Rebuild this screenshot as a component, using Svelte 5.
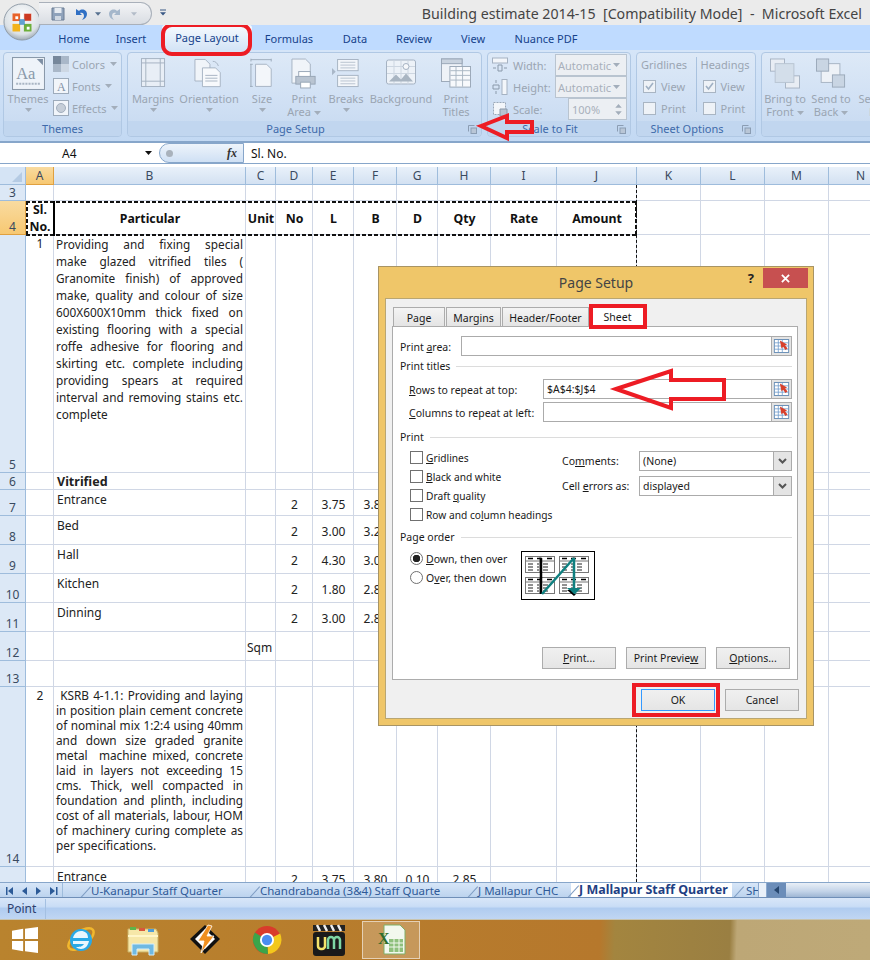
<script>
  const tabs = [
    { name: 'Home', w: 58 },
    { name: 'Insert', w: 56 },
    { name: 'Page Layout', w: 90, on: true },
    { name: 'Formulas', w: 68 },
    { name: 'Data', w: 64 },
    { name: 'Review', w: 54 },
    { name: 'View', w: 64 },
    { name: 'Nuance PDF', w: 82 }
  ]
  const colNames = ['A', 'B', 'C', 'D', 'E', 'F', 'G', 'H', 'I', 'J', 'K', 'L', 'M', 'N']
  const rowNums = [3, 4, 5, 6, 7, 8, 9, 10, 11, 12, 13, 14, 15]

  const text1 = [
    'Providing and fixing special',
    'make glazed vitrified tiles (',
    'Granomite finish) of approved',
    'make, quality and colour of size',
    '600X600X10mm thick fixed on',
    'existing flooring with a special',
    'roffe adhesive for flooring and',
    'skirting etc. complete including',
    'providing spears at required',
    'interval and removing stains etc.',
    'complete'
  ]
  const text2 = [
    '\u00a0KSRB 4-1.1: Providing and laying',
    'in position plain cement concrete',
    'of nominal mix 1:2:4 using 40mm',
    'and down size graded granite',
    'metal  machine mixed, concrete',
    'laid in layers not exceeding 15',
    'cms. Thick, well compacted in',
    'foundation and plinth, including',
    'cost of all materials, labour, HOM',
    'of machinery curing complete as',
    'per specifications.'
  ]

  // row number -> column letter -> value, everything else is empty
  const measures = [
    [7, 'Entrance', '3.75', '3.80'],
    [8, 'Bed', '3.00', '3.20'],
    [9, 'Hall', '4.30', '3.00'],
    [10, 'Kitchen', '1.80', '2.80'],
    [11, 'Dinning', '3.00', '2.80']
  ]

  const sheetTabs = [
    { name: 'U-Kanapur Staff Quarter', w: 169 },
    { name: 'Chandrabanda (3&4) Staff Quarte', w: 218 },
    { name: 'J Mallapur CHC', w: 95 }
  ]
</script>

{#snippet pick()}
  <svg class="pick" viewBox="0 0 20 20">
    <rect x="1" y="2" width="18" height="16" fill="#fff" stroke="#4f7cab" />
    <path d="M1 6h18M1 10h18M1 14h18M6 2v16M11 2v16" stroke="#6f9bcb" fill="none" />
    <path d="M8 3l9 5-2.500 1 3 4-2.500 2-3-4-2 2z" fill="#d8402c" />
  </svg>
{/snippet}

{#snippet caret()}
  <svg class="caret" viewBox="0 0 7 4"><path d="M0 0h7L3.5 4z" fill="#a3aebb" /></svg>
{/snippet}

{#snippet launcher()}
  <svg class="launcher" viewBox="0 0 9 9">
    <path d="M.5.5h6M.5.5v6" stroke="#8b9db3" fill="none" />
    <rect x="3" y="3" width="5.5" height="5.5" fill="#b9c6d6" stroke="#8b9db3" />
  </svg>
{/snippet}

{#snippet check(on)}
  <span class="rcheck">
    {#if on}<svg viewBox="0 0 11 11"><path d="M2 5l2.5 3L9 2" stroke="#9fb0c4" stroke-width="1.6" fill="none" /></svg>{/if}
  </span>
{/snippet}

<div class="screen">
  <header class="title">
    <div class="orb">
      <svg viewBox="0 0 40 40" width="38" height="38">
        <defs>
          <radialGradient id="orbg" cx="50%" cy="35%" r="70%">
            <stop offset="0" stop-color="#fff" />
            <stop offset=".7" stop-color="#dbe1e6" />
            <stop offset="1" stop-color="#8d9aa6" />
          </radialGradient>
        </defs>
        <circle cx="20" cy="20" r="19" fill="url(#orbg)" stroke="#8e9aa5" />
        <path d="M10 11h8v8h-8z" fill="#e8632a" />
        <path d="M13 14h3v3h-3z" fill="#fff" />
        <path d="M22 11h8v8h-8z" fill="#cc3a22" stroke="#fff" stroke-width=".5" />
        <path d="M10 22h8v8h-8z" fill="#f2b31c" />
        <path d="M22 22h8v8h-8z" fill="#6caf3a" />
        <path d="M25 25h3v3h-3z" fill="#fff" />
        <path d="M17 17h6v6h-6z" fill="#3f8bc7" opacity=".8" />
      </svg>
    </div>
    <div class="qat">
      <svg viewBox="0 0 14 14" width="14" height="14">
        <path d="M1 1h12v12H1z" fill="#8fa2bb" stroke="#6a7c94" />
        <path d="M3.5 1h7v5h-7z" fill="#e6ebf1" />
        <path d="M4 9h6v4H4z" fill="#d0d8e2" />
      </svg>
      <svg viewBox="0 0 14 14" width="14" height="14">
        <path d="M3 2v6h6L7 6c2-1 4 0 4 3 0 1-1 3-2 4 3-1 5-3 5-6 0-4-5-6-8-3z" fill="#2f6fc4" />
      </svg>
      <svg viewBox="0 0 7 4" width="6" height="4"><path d="M0 0h7L3.5 4z" fill="#56708f" /></svg>
      <svg viewBox="0 0 14 14" width="14" height="14">
        <path d="M11 2v6H5l2-2C5 5 3 6 3 9c0 1 1 3 2 4-3-1-5-3-5-6 0-4 5-6 8-3z" fill="#a5b7cb" />
      </svg>
      <svg viewBox="0 0 7 4" width="6" height="4"><path d="M0 0h7L3.5 4z" fill="#b3bcc8" /></svg>
    </div>
    <svg class="customize" viewBox="0 0 7 8" width="6" height="8"><path d="M0 0h7v1H0zM0 3h7L3.5 7z" fill="#3b5a86" /></svg>
    <div class="doc">Building estimate 2014-15&nbsp; [Compatibility Mode] &nbsp;-&nbsp; Microsoft Excel</div>
  </header>

  <nav class="tabs">
    {#each tabs as t}
      <span class="tab" class:on={t.on} style="width:{t.w}px">{t.name}</span>
    {/each}
  </nav>

  <section class="ribbon">
    <div class="group g-themes">
      <div class="gbody">
        <div class="big themes-btn">
          <svg viewBox="0 0 32 32" width="33" height="33">
            <rect x=".5" y=".5" width="31" height="31" fill="#eef3f9" stroke="#8a99aa" />
            <path d="M24 2h6v6z" fill="#7d8ea3" />
            <text x="4" y="21" font-size="16" fill="#8a99aa" font-family="Liberation Serif, serif">Aa</text>
            <path d="M4 26h24" stroke="#a9b5c3" stroke-width="2" stroke-dasharray="2 1" />
          </svg>
          <span class="lbl">Themes</span>
          {@render caret()}
        </div>
        <div class="smalls">
          <div class="small">
            <svg viewBox="0 0 16 16" width="16" height="16"><rect width="16" height="16" fill="#cdd7e3" /><rect width="8" height="8" fill="#76879b" /><rect x="8" width="8" height="8" fill="#a9b7c8" /><rect y="8" width="8" height="8" fill="#a9b7c8" /></svg>
            <span>Colors</span>{@render caret()}
          </div>
          <div class="small">
            <svg viewBox="0 0 16 16" width="16" height="16"><rect x=".5" y=".5" width="15" height="15" fill="#f1f5fa" stroke="#9dabbb" /><text x="4" y="13" font-size="12" fill="#7f90a5" font-family="Liberation Serif, serif">A</text></svg>
            <span>Fonts</span>{@render caret()}
          </div>
          <div class="small">
            <svg viewBox="0 0 16 16" width="16" height="16"><rect x=".5" y=".5" width="15" height="15" fill="#f1f5fa" stroke="#9dabbb" /><circle cx="8" cy="8" r="4.5" fill="#c6ced8" stroke="#a3afbe" /></svg>
            <span>Effects</span>{@render caret()}
          </div>
        </div>
      </div>
      <div class="glabel">Themes</div>
    </div>

    <div class="group g-setup">
      <div class="gbody">
        <div class="big" style="width:42px">
          <svg viewBox="0 0 26 32" width="25" height="30"><rect x=".5" y=".5" width="24" height="29" fill="#e8eef6" stroke="#a5b2c2" /><path d="M5 0v30M20 0v30M0 5h25M0 24h25" stroke="#a5b2c2" fill="none" /></svg>
          <span class="lbl">Margins</span>{@render caret()}
        </div>
        <div class="big" style="width:70px">
          <svg viewBox="0 0 32 32" width="30" height="30"><path d="M1 1h11l5 5v18H1z" fill="#f0f4f9" stroke="#a5b2c2" /><path d="M9 10h14l5 5v15H9z" fill="#f7f9fc" stroke="#a5b2c2" /><path d="M12 18h13M12 21h13M12 24h13" stroke="#a5b2c2" /><path d="M20 3c3 0 5 2 6 5" stroke="#a5b2c2" fill="none" /></svg>
          <span class="lbl">Orientation</span>{@render caret()}
        </div>
        <div class="big" style="width:36px">
          <svg viewBox="0 0 26 32" width="24" height="30"><path d="M1 1h22M1 0v3M23 0v3M1 6v24M0 6h3M0 30h3" stroke="#9aa9ba" fill="none" /><path d="M6 6h12l5 5v19H6z" fill="#f3f6fa" stroke="#a5b2c2" /></svg>
          <span class="lbl">Size</span>{@render caret()}
        </div>
        <div class="big" style="width:48px">
          <svg viewBox="0 0 28 32" width="27" height="30"><path d="M1 1h14l5 5v20H1z" fill="#f0f4f9" stroke="#a5b2c2" /><rect x="8" y="14" width="12" height="6" fill="#fff" stroke="#98a6b6" /><rect x="5" y="19" width="20" height="8" fill="#b9c4d1" stroke="#98a6b6" /><rect x="10" y="25" width="10" height="6" fill="#fff" stroke="#98a6b6" /></svg>
          <span class="lbl">Print<br />Area {@render caret()}</span>
        </div>
        <div class="big" style="width:36px">
          <svg viewBox="0 0 30 32" width="28" height="30"><rect x="6" y="1" width="22" height="12" fill="#f3f6fa" stroke="#a5b2c2" /><rect x="6" y="18" width="22" height="12" fill="#f3f6fa" stroke="#a5b2c2" /><path d="M9 4h16M9 7h16M9 10h16M9 21h16M9 24h16M9 27h16" stroke="#b6c1ce" /><path d="M0 10l4 4-4 4z" fill="#a9b7c8" /></svg>
          <span class="lbl">Breaks</span>{@render caret()}
        </div>
        <div class="big" style="width:74px">
          <svg viewBox="0 0 30 28" width="30" height="28"><rect x=".5" y=".5" width="29" height="24" rx="2" fill="#edf2f8" stroke="#a5b2c2" /><path d="M1 7h28M1 14h28M8 1v24M15 1v24M22 1v24" stroke="#cdd6e1" /><circle cx="20" cy="7" r="3" fill="#f6f8fb" stroke="#a5b2c2" /><path d="M3 22l7-7 5 5 5-6 7 8z" fill="#a9b5c2" /></svg>
          <span class="lbl">Background</span>
        </div>
        <div class="big" style="width:36px">
          <svg viewBox="0 0 32 32" width="30" height="30"><rect x=".5" y=".5" width="22" height="24" fill="#eef2f7" stroke="#98a6b6" /><rect x=".5" y=".5" width="22" height="5" fill="#c9d3df" stroke="#98a6b6" /><rect x="9.5" y="8.5" width="22" height="22" fill="#f7f9fc" stroke="#98a6b6" /><path d="M10 13h21M10 18h21M10 23h21M16 9v21M23 9v21" stroke="#a9b5c2" /></svg>
          <span class="lbl">Print<br />Titles</span>
        </div>
      </div>
      <div class="glabel lnch">Page Setup{@render launcher()}</div>
    </div>

    <div class="group g-fit">
      <div class="gbody fit">
        <div class="fitrow">
          <svg viewBox="0 0 16 16" width="16" height="16"><rect x=".5" y="1" width="15" height="5" fill="#f3f6fa" stroke="#a5b2c2" /><path d="M1 11h3M12 11h3M6 8h4v6H6z" stroke="#8a99aa" fill="none" /></svg>
          <span class="fl">Width:</span>
          <span class="combo">Automatic{@render caret()}</span>
        </div>
        <div class="fitrow">
          <svg viewBox="0 0 16 16" width="16" height="16"><rect x="10" y=".5" width="5" height="15" fill="#f3f6fa" stroke="#a5b2c2" /><path d="M4 1v3M4 12v3M1 6h6v4H1z" stroke="#8a99aa" fill="none" /></svg>
          <span class="fl">Height:</span>
          <span class="combo">Automatic{@render caret()}</span>
        </div>
        <div class="fitrow">
          <svg viewBox="0 0 16 16" width="16" height="16"><rect x="1.5" y="1.5" width="12" height="12" fill="#f3f6fa" stroke="#9aa8b9" stroke-dasharray="2 1" /><path d="M8 8h7v7H8z" fill="#b7c3d1" stroke="#8a99aa" /></svg>
          <span class="fl">Scale:</span>
          <span class="combo spin">100%<svg viewBox="0 0 7 14" width="7" height="13"><path d="M0 5l3.500-4L7 5zM0 9h7l-3.500 4z" fill="#a3aebb" /></svg></span>
        </div>
      </div>
      <div class="glabel lnch">Scale to Fit{@render launcher()}</div>
    </div>

    <div class="group g-sheet">
      <div class="gbody opts">
        <div class="optcol">
          <span class="ohead">Gridlines</span>
          <span class="orow">{@render check(true)}View</span>
          <span class="orow">{@render check(false)}Print</span>
        </div>
        <div class="optcol sep">
          <span class="ohead">Headings</span>
          <span class="orow">{@render check(true)}View</span>
          <span class="orow">{@render check(false)}Print</span>
        </div>
      </div>
      <div class="glabel lnch">Sheet Options{@render launcher()}</div>
    </div>

    <div class="group g-arrange">
      <div class="gbody">
        <div class="big" style="width:46px">
          <svg viewBox="0 0 32 32" width="30" height="30"><rect x=".5" y=".5" width="15" height="13" fill="#e8edf4" stroke="#a5b2c2" /><rect x="16.500" y="18.500" width="15" height="13" fill="#e8edf4" stroke="#a5b2c2" /><rect x="5.500" y="5.500" width="20" height="20" fill="#d3deea" stroke="#b7c3d1" /></svg>
          <span class="lbl">Bring to<br />Front {@render caret()}</span>
        </div>
        <div class="big" style="width:46px">
          <svg viewBox="0 0 32 32" width="30" height="30"><rect x="5.500" y="5.500" width="20" height="20" fill="#eef2f7" stroke="#a5b2c2" /><rect x=".5" y=".5" width="13" height="13" fill="#c9d5e3" stroke="#9aa8b9" /><rect x="17.500" y="17.500" width="13" height="13" fill="#c9d5e3" stroke="#9aa8b9" /></svg>
          <span class="lbl">Send to<br />Back {@render caret()}</span>
        </div>
        <div class="big" style="width:56px">
          <svg viewBox="0 0 32 32" width="30" height="30"><rect x="6.500" y="6.500" width="18" height="18" fill="#e8edf4" stroke="#a5b2c2" /></svg>
          <span class="lbl">Selection<br />Pane</span>
        </div>
      </div>
      <div class="glabel"></div>
    </div>
  </section>

  <div class="formula">
    <div class="namebox"><span>A4</span><svg viewBox="0 0 7 4" width="7" height="4"><path d="M0 0h7L3.500 4z" fill="#111" /></svg></div>
    <div class="fxcap"><i class="dot"></i><em>fx</em></div>
    <div class="fval">Sl. No.</div>
  </div>

  <main class="sheet">
    <div class="corner"><svg viewBox="0 0 10 10" width="10" height="10"><path d="M10 0v10H0z" fill="#b5cbe4" /></svg></div>
    {#each colNames as c, i}
      <div class="colhead" class:cur={i === 0}>{c}</div>
    {/each}

    {#each rowNums as r, y}
      <div class="rowhead" class:cur={r === 4} style="grid-row:{y + 2}">{r}</div>
      {#each colNames as c, x}
        <div class="cell" style="grid-row:{y + 2};grid-column:{x + 2}"></div>
      {/each}
    {/each}

    <!-- header row -->
    <div class="v hd slno" style="grid-row:3;grid-column:2">Sl.<br />No.</div>
    {#each ['Particular', 'Unit', 'No', 'L', 'B', 'D', 'Qty', 'Rate', 'Amount'] as h, i}
      <div class="v hd" style="grid-row:3;grid-column:{i + 3}">{h}</div>
    {/each}

    <div class="v num top" style="grid-row:4;grid-column:2">1</div>
    <div class="v para p1" style="grid-row:4;grid-column:3">
      {#each text1 as line, i}<div class:last={i === text1.length - 1}>{line}</div>{/each}
    </div>

    <div class="v bold" style="grid-row:5;grid-column:3">Vitrified</div>

    {#each measures as m}
      <div class="v plain top" style="grid-row:{m[0] - 1};grid-column:3">{m[1]}</div>
      <div class="v num low" style="grid-row:{m[0] - 1};grid-column:5">2</div>
      <div class="v num low" style="grid-row:{m[0] - 1};grid-column:6">{m[2]}</div>
      <div class="v num low" style="grid-row:{m[0] - 1};grid-column:7">{m[3]}</div>
    {/each}

    <div class="v plain mid" style="grid-row:11;grid-column:4">Sqm</div>

    <div class="v num top" style="grid-row:13;grid-column:2">2</div>
    <div class="v para p2" style="grid-row:13;grid-column:3">
      {#each text2 as line, i}<div class:last={i === text2.length - 1}>{line}</div>{/each}
    </div>

    <div class="v plain top" style="grid-row:14;grid-column:3">Entrance</div>
    <div class="v num tail" style="grid-row:14;grid-column:5">2</div>
    <div class="v num tail" style="grid-row:14;grid-column:6">3.75</div>
    <div class="v num tail" style="grid-row:14;grid-column:7">3.80</div>
    <div class="v num tail" style="grid-row:14;grid-column:8">0.10</div>
    <div class="v num tail" style="grid-row:14;grid-column:9">2.85</div>

    <div class="pagebreak"></div>
    <div class="ants"></div>
    <div class="active"></div>
  </main>

  <div class="sheettabs">
    <div class="tabnav">
      <svg viewBox="0 0 62 16" width="62" height="16">
        <g fill="#2c5a97">
          <path d="M6 4h1.500v8H6zM13 4v8L8 8z" />
          <path d="M27 4v8l-5-4z" />
          <path d="M36 4v8l5-4z" />
          <path d="M50 4l5 4-5 4zM56 4h1.500v8H56z" />
        </g>
      </svg>
    </div>
    <div class="stabs">
      {#each sheetTabs as t}
        <span class="stab" style="width:{t.w}px">{t.name}</span>
      {/each}
      <span class="stab active-tab">J Mallapur Staff Quarter</span>
      <span class="stab last-tab">SH</span>
    </div>
    <div class="hscroll">
      <i class="split"></i>
      <span class="sbtn"><svg viewBox="0 0 5 8" width="5" height="8"><path d="M5 0v8L0 4z" fill="#26466f" /></svg></span>
      <span class="thumb"></span>
    </div>
  </div>

  <footer class="status"><span>Point</span></footer>

  <div class="taskbar">
    <div class="ti win">
      <svg viewBox="0 0 28 28" width="28" height="26"><path d="M0 4l12-2v11H0zM14 2l14-2v13H14zM0 15h12v11L0 24zM14 15h14v13l-14-2z" fill="#fff" /></svg>
    </div>
    <div class="ti">
      <svg viewBox="0 0 32 32" width="32" height="32">
        <ellipse cx="16" cy="15" rx="15" ry="7" fill="none" stroke="#f1b72d" stroke-width="2.500" transform="rotate(-38 16 15)" />
        <circle cx="16" cy="16" r="11" fill="#29a9e6" />
        <path d="M8 14h15c0-5-3-7-7-7s-7 3-8 7zm5-3h6c0 0-1-2-3-2s-3 2-3 2z" fill="#e9f7fe" />
        <path d="M8 17h16c-1 5-4 8-8 8-2 0-4-1-5-2 3 0 6 0 8-3H8z" fill="#e9f7fe" />
      </svg>
    </div>
    <div class="ti">
      <svg viewBox="0 0 32 32" width="32" height="32">
        <path d="M1 5h28l2 4v19H1z" fill="#f6e7a8" stroke="#c9b067" />
        <path d="M3 3h6v3H3z" fill="#5eb44a" /><path d="M12 4h6v3h-6z" fill="#d9573b" /><path d="M21 5h6v3h-6z" fill="#4f9dd8" />
        <path d="M1 12h30" stroke="#fff6c9" stroke-width="2" />
        <path d="M5 20h22v11h-5v-6H10v6H5z" fill="#6fb9e2" stroke="#d6eefa" />
      </svg>
    </div>
    <div class="ti">
      <svg viewBox="0 0 32 32" width="32" height="32">
        <path d="M16 1l15 14-15 15L1 15z" fill="#111" />
        <path d="M16 5l10 10-10 10L6 15z" fill="#fff" />
        <path d="M19 1L9 17h6l-3 12 13-17h-7l5-10z" fill="#f08f1f" stroke="#fff" stroke-width=".8" />
      </svg>
    </div>
    <div class="ti">
      <svg viewBox="0 0 32 32" width="30" height="30">
        <circle cx="16" cy="16" r="15" fill="#d93b2b" />
        <path d="M16 16L30 9A15.500 15.500 0 0 1 17 31z" fill="#f3c81c" />
        <path d="M16 16L17 31A15.500 15.500 0 0 1 3 8z" fill="#3ba54a" />
        <circle cx="16" cy="16" r="7.500" fill="#fff" />
        <circle cx="16" cy="16" r="5.500" fill="#4a8df0" />
      </svg>
    </div>
    <div class="ti">
      <svg viewBox="0 0 32 32" width="32" height="32">
        <rect x="0" y="8" width="32" height="24" rx="3" fill="#1a1a1a" />
        <path d="M0 1h32v6H0z" fill="#222" />
        <path d="M4 1l3 6M11 1l3 6M18 1l3 6M25 1l3 6" stroke="#eee" stroke-width="2.500" />
        <path d="M5 13v9a3 3 0 0 0 3 3h1a3 3 0 0 0 3-3v-9" stroke="#f4e36b" stroke-width="2.500" fill="none" />
        <path d="M15 25v-9a3 3 0 0 1 6 0v9M21 16a3 3 0 0 1 6 0v9" stroke="#7ed6a4" stroke-width="2.500" fill="none" />
      </svg>
    </div>
    <div class="ti excel">
      <svg viewBox="0 0 32 32" width="32" height="32">
        <path d="M9 1h16l5 5v24H9z" fill="#f2f8ee" stroke="#7fb069" />
        <rect x="14" y="15" width="14" height="13" fill="#8ec07c" />
        <path d="M14 19h14M14 23h14M19 15v13M24 15v13" stroke="#f2f8ee" />
        <text x="3" y="20" font-size="16" font-weight="700" font-family="Liberation Serif, serif" fill="#2f6d2c">X</text>
      </svg>
    </div>
  </div>

  <div class="dialog">
    <div class="dtitle">
      <span class="dname">Page Setup</span>
      <span class="help">?</span>
      <span class="close"><svg viewBox="0 0 10 10" width="9" height="9"><path d="M1 1l8 8M9 1l-8 8" stroke="#fff" stroke-width="2" /></svg></span>
    </div>
    <div class="dinner">
      <div class="dtabs">
        <span class="dtab" style="width:52px">Page</span>
        <span class="dtab" style="width:55px">Margins</span>
        <span class="dtab" style="width:87px">Header/Footer</span>
        <span class="dtab cur" style="width:55px">Sheet</span>
      </div>
      <div class="panel">
        <div class="frow area">
          <span class="plabel"><span>Print <u>a</u>rea:</span></span>
          <span class="inp"></span>{@render pick()}
        </div>
        <div class="legend"><span>Print titles</span><i></i></div>
        <div class="frow rep">
          <span class="ilabel"><u>R</u>ows to repeat at top:</span>
          <span class="inp">$A$4:$J$4</span>{@render pick()}
        </div>
        <div class="frow rep second">
          <span class="ilabel"><u>C</u>olumns to repeat at left:</span>
          <span class="inp"></span>{@render pick()}
        </div>
        <div class="legend lprint"><span>Print</span><i></i></div>
        <div class="printopts">
          <div class="checks">
            <label><b class="cb"></b><span><u>G</u>ridlines</span></label>
            <label><b class="cb"></b><span><u>B</u>lack and white</span></label>
            <label><b class="cb"></b><span>Draft <u>q</u>uality</span></label>
            <label><b class="cb"></b><span>Row and co<u>l</u>umn headings</span></label>
          </div>
          <div class="selects">
            <div class="srow"><span>Co<u>m</u>ments:</span><span class="sel">(None)<i><svg viewBox="0 0 9 6" width="9" height="6"><path d="M1 1l3.500 3.500L8 1" stroke="#555" stroke-width="2" fill="none" /></svg></i></span></div>
            <div class="srow"><span>Cell <u>e</u>rrors as:</span><span class="sel">displayed<i><svg viewBox="0 0 9 6" width="9" height="6"><path d="M1 1l3.500 3.500L8 1" stroke="#555" stroke-width="2" fill="none" /></svg></i></span></div>
          </div>
        </div>
        <div class="legend lorder"><span>Page order</span><i></i></div>
        <div class="order">
          <div class="radios">
            <label><b class="rb on"></b><span><u>D</u>own, then over</span></label>
            <label><b class="rb"></b><span>O<u>v</u>er, then down</span></label>
          </div>
          <div class="orderpic">
            <svg viewBox="0 0 74 49" width="74" height="49">
              <rect x=".5" y=".5" width="73" height="48" fill="#fff" stroke="#000" />
              {#each [[4, 5], [38, 5], [4, 26], [38, 26]] as p}
                <g transform="translate({p[0]} {p[1]})">
                  <rect x=".5" y=".5" width="29" height="16" fill="#fff" stroke="#777" />
                  <path d="M1 5h28M15 1v15" stroke="#777" fill="none" />
                  <path d="M3 2.500h5M12 2.500h5M22 2.500h5" stroke="#000" stroke-width="1.500" />
                  <path d="M3 8h5M3 11h5M3 14h5M12 8h2M18 8h5M18 11h5M18 14h5M12 11h2M12 14h2" stroke="#222" />
                </g>
              {/each}
              <path d="M20 7v36" stroke="#000" stroke-width="2.500" />
              <path d="M21 43L53 7" stroke="#0f8080" stroke-width="2.500" />
              <path d="M53 7v33" stroke="#0f8080" stroke-width="2.500" />
              <path d="M46 37h14l-7 7z" fill="#0f8080" />
              <path d="M46 39l3 0 4 4 2 0-2 2z" fill="#000" />
            </svg>
          </div>
        </div>
        <div class="pbtns">
          <span class="btn"><u>P</u>rint...</span>
          <span class="btn wide">Print Previe<u>w</u></span>
          <span class="btn"><u>O</u>ptions...</span>
        </div>
      </div>
      <div class="dfoot">
        <span class="btn ok">OK</span>
        <span class="btn">Cancel</span>
      </div>
    </div>
  </div>

  <!-- red marks someone drew on the screenshot -->
  <svg class="marks" viewBox="0 0 870 960" width="870" height="960">
    <g fill="none" stroke="#ed1c24" stroke-width="4">
      <rect x="163" y="25" width="87" height="29" rx="9" />
      <path d="M481 126l26-10v6h25v10h-25v6z" />
      <rect x="591" y="306" width="54" height="21" />
      <path d="M616 389l55-18v9h53v19h-53v9z" />
      <rect x="634" y="685" width="84" height="30" />
    </g>
  </svg>
</div>

<style>
  :global(body) {
    margin: 0;
    background: #fff;
  }
  .screen {
    width: 870px;
    height: 960px;
    position: relative;
    overflow: hidden;
    display: flex;
    flex-direction: column;
    font-family: "Noto Sans", "DejaVu Sans", sans-serif;
    font-size: 11px;
    color: #111;
  }
  u {
    text-decoration-thickness: 1px;
    text-underline-offset: 1px;
  }

  /* title bar */
  .title {
    height: 25px;
    flex: none;
    background: #ebebeb;
    display: flex;
    align-items: flex-start;
    position: relative;
    z-index: 2;
  }
  .orb {
    width: 38px;
    height: 38px;
    margin: 3px 0 0 3px;
    flex: none;
  }
  .qat {
    display: flex;
    align-items: center;
    gap: 8px;
    height: 21px;
    margin: 2px 0 0 -2px;
    padding: 0 14px 0 12px;
    background: linear-gradient(#f3f4f6, #d9dde3);
    border: 1px solid #a9b0ba;
    border-left: 0;
    border-radius: 0 12px 12px 0;
  }
  .customize {
    margin: 9px 0 0 8px;
  }
  .doc {
    margin-left: auto;
    padding: 4px 8px 0 0;
    font-size: 14.2px;
    color: #444;
    white-space: nowrap;
  }

  /* tab row */
  .tabs {
    height: 25px;
    flex: none;
    background: #bfdbff;
    display: flex;
    padding-left: 45px;
    font-size: 11px;
    color: #15428b;
    align-items: center;
  }
  .tab {
    padding-top: 1px;
    white-space: nowrap;
    text-align: center;
    flex: none;
  }
  .tab.on {
    background: linear-gradient(#f6fafe, #d4e4f6);
    height: 25px;
    box-sizing: border-box;
    padding-top: 0;
    line-height: 25px;
    border-radius: 3px 3px 0 0;
    margin: 0 3px;
  }

  /* ribbon */
  .ribbon {
    height: 93px;
    flex: none;
    display: flex;
    gap: 5px;
    padding: 2px 0 4px 3px;
    box-sizing: border-box;
    background: linear-gradient(#d5e5f8, #c3d9f3);
    border-bottom: 2px solid #87a6ca;
    overflow: hidden;
    font-size: 11px;
    color: #9aa5b2;
  }
  .group {
    flex: none;
    box-sizing: border-box;
    border: 1px solid #b0c8e4;
    border-radius: 4px;
    background: linear-gradient(#dde9f7, #d0e0f4 60%, #c6d9f0);
    display: flex;
    flex-direction: column;
    overflow: hidden;
  }
  .gbody {
    flex: 1;
    display: flex;
    min-height: 0;
  }
  .glabel {
    height: 15px;
    flex: none;
    background: #c1d6ef;
    color: #3e6aaa;
    text-align: center;
    font-size: 11px;
    line-height: 15px;
    position: relative;
  }
  .glabel.lnch {
    padding-right: 18px;
  }
  .launcher {
    position: absolute;
    right: 4px;
    top: 4px;
    width: 9px;
    height: 9px;
  }
  .g-themes { width: 119px; }
  .g-setup { width: 355px; }
  .g-fit { width: 144px; }
  .g-sheet { width: 120px; }
  .g-arrange { width: 120px; }
  .big {
    flex: none;
    display: flex;
    flex-direction: column;
    align-items: center;
    padding-top: 4px;
    box-sizing: border-box;
    line-height: 13px;
    text-align: center;
  }
  .big svg:first-child {
    height: 33px;
    margin-bottom: 2px;
  }
  .caret {
    width: 7px;
    height: 4px;
    flex: none;
    margin-top: 3px;
    vertical-align: middle;
  }
  .lbl .caret {
    margin-top: 0;
  }
  .g-setup .gbody {
    padding-left: 4px;
  }
  .themes-btn {
    width: 46px;
    margin-left: 1px;
  }
  .smalls {
    display: flex;
    flex-direction: column;
    padding: 3px 0 0 2px;
    gap: 6px;
  }
  .small {
    display: flex;
    align-items: center;
    gap: 3px;
    height: 16px;
    white-space: nowrap;
  }
  .small .caret {
    margin: 0 0 0 2px;
  }
  .fit {
    flex-direction: column;
    padding: 1px 3px 0 4px;
  }
  .fitrow {
    display: flex;
    align-items: center;
    height: 22px;
    flex: none;
  }
  .fl {
    margin-left: 5px;
  }
  .combo {
    margin-left: auto;
    width: 72px;
    height: 22px;
    box-sizing: border-box;
    border: 1px solid #b9c4d0;
    background: #eceff3;
    display: flex;
    align-items: center;
    justify-content: space-between;
    padding: 0 6px 0 2px;
    color: #a8b0bb;
  }
  .combo .caret {
    margin: 0;
  }
  .combo.spin {
    width: 59px;
    padding: 0 4px 0 3px;
  }
  .opts {
    padding: 4px 0 0 4px;
  }
  .optcol {
    width: 56px;
    display: flex;
    flex-direction: column;
    gap: 7px;
  }
  .optcol.sep {
    border-left: 1px solid #a9c2df;
    padding-left: 4px;
    height: 55px;
  }
  .ohead,
  .orow {
    height: 15px;
    line-height: 15px;
    display: flex;
    gap: 5px;
    align-items: center;
  }
  .rcheck {
    width: 11px;
    height: 11px;
    border: 1px solid #a9b5c3;
    background: #eef2f7;
    margin-left: 2px;
    display: block;
    flex: none;
  }
  .rcheck svg {
    display: block;
  }

  /* formula bar */
  .formula {
    height: 20px;
    flex: none;
    display: flex;
    background: #fff;
    border-bottom: 1px solid #87a6ca;
    margin-bottom: 3px;
    font-size: 12px;
    color: #111;
  }
  .namebox {
    width: 159px;
    flex: none;
    box-sizing: border-box;
    padding: 0 7px 0 62px;
    display: flex;
    align-items: center;
    justify-content: space-between;
  }
  .fxcap {
    width: 85px;
    flex: none;
    box-sizing: border-box;
    border: 1px solid #87a6ca;
    border-radius: 10px 0 0 10px;
    background: linear-gradient(#eef4fb, #cfe0f4);
    display: flex;
    align-items: center;
    justify-content: space-between;
    padding: 0 6px;
  }
  .dot {
    width: 7px;
    height: 7px;
    border-radius: 50%;
    background: #a9b2bc;
    display: block;
  }
  .fxcap em {
    font-family: "Liberation Serif", serif;
    font-weight: 700;
    font-size: 12px;
    color: #333;
  }
  .fval {
    padding-left: 7px;
    line-height: 21px;
  }

  /* worksheet */
  .sheet {
    flex: 1;
    min-height: 0;
    overflow: hidden;
    display: grid;
    background: #fff;
    grid-template-columns: 26px 28px 192px 30px 37px 41px 43px 41px 53px 66px 80px 64px 64px 64px 64px;
    grid-template-rows: 18px 16px 34px 238px 17px 26px 29px 29px 29px 29px 29px 26px 180px 40px;
    font-size: 12px;
    color: #222;
  }
  .corner {
    background: #d5e4f5;
    border-right: 1px solid #9ebcdc;
    border-bottom: 1px solid #9ebcdc;
    display: flex;
    align-items: flex-end;
    justify-content: flex-end;
    padding: 0 3px 2px 0;
  }
  .colhead {
    background: linear-gradient(#e9f1fa, #d3e1f2);
    border-right: 1px solid #9ebcdc;
    border-bottom: 1px solid #9ebcdc;
    text-align: center;
    line-height: 17px;
    color: #3a4a60;
    font-size: 12px;
  }
  .colhead.cur {
    background: linear-gradient(#f9dba0, #f7c872);
    border-color: #e0a03f;
  }
  .rowhead {
    grid-column: 1;
    background: #dce8f6;
    border-right: 1px solid #9ebcdc;
    border-bottom: 1px solid #9ebcdc;
    display: flex;
    align-items: flex-end;
    justify-content: center;
    color: #3a4a60;
    font-size: 12px;
    line-height: 15px;
  }
  .rowhead.cur {
    background: linear-gradient(#f9dba0, #f7c872);
    border-color: #e0a03f;
  }
  .cell {
    border-right: 1px solid #d0d7e5;
    border-bottom: 1px solid #d0d7e5;
  }
  .v {
    padding: 0 3px;
    white-space: nowrap;
    min-width: 0;
    overflow: hidden;
  }
  .hd {
    display: flex;
    align-items: center;
    justify-content: center;
    font-weight: 700;
    font-size: 12.3px;
    color: #111;
    padding: 0;
  }
  .slno {
    display: block;
    text-align: center;
    line-height: 17px;
  }
  .num {
    text-align: center;
  }
  .top {
    padding-top: 1px;
    line-height: 15px;
  }
  .plain.top {
    padding-top: 2px;
  }
  .low {
    align-self: center;
    padding-top: 3px;
    line-height: 16px;
  }
  .tail {
    line-height: 15px;
    padding-top: 5px;
  }
  .bold {
    font-weight: 700;
    font-size: 12.5px;
    line-height: 17px;
  }
  .plain {
    line-height: 15px;
  }
  .mid {
    align-self: center;
    padding: 2px 1px 0;
  }
  .para {
    font-size: 11.8px;
    white-space: normal;
    padding: 1px 3px 0 2px;
  }
  .para div {
    text-align: justify;
    text-align-last: justify;
    white-space: pre-wrap;
  }
  .para div.last {
    text-align-last: left;
  }
  .p1 {
    line-height: 17px;
  }
  .p2 {
    line-height: 15px;
  }
  .pagebreak {
    grid-column: 11;
    grid-row: 2 / -1;
    justify-self: end;
    border-right: 1px dashed #111;
    width: 0;
  }
  .ants {
    grid-column: 2 / 12;
    grid-row: 3;
    margin: 0 0 -1px 0;
    background:
      repeating-linear-gradient(90deg, #111 0 4px, transparent 4px 6px) top / 100% 2px no-repeat,
      repeating-linear-gradient(90deg, #111 0 4px, transparent 4px 6px) bottom / 100% 2px no-repeat,
      repeating-linear-gradient(#111 0 4px, transparent 4px 6px) left / 2px 100% no-repeat,
      repeating-linear-gradient(#111 0 4px, transparent 4px 6px) right / 2px 100% no-repeat;
  }
  .active {
    grid-column: 2;
    grid-row: 3;
    border-right: 2px solid #000;
    margin: 0 -1px -1px 0;
  }

  /* sheet tabs */
  .sheettabs {
    height: 16px;
    flex: none;
    background: linear-gradient(#d7e6f8, #bcd3ee);
    border-top: 1px solid #87a6ca;
    border-bottom: 1px solid #6f8fb8;
    display: flex;
    font-size: 11.5px;
    color: #2f5a98;
    box-sizing: border-box;
    position: relative;
  }
  .tabnav {
    width: 62px;
    flex: none;
    border-right: 1px solid #9ebcdc;
  }
  .tabnav svg {
    display: block;
  }
  .stabs {
    display: flex;
    flex: 1;
    min-width: 0;
    overflow: hidden;
    padding-left: 20px;
    white-space: nowrap;
  }
  .stab {
    flex: none;
    box-sizing: border-box;
    padding-left: 8px;
    line-height: 15px;
    position: relative;
  }
  .stab::before {
    content: "";
    position: absolute;
    left: -7px;
    top: 2px;
    width: 18px;
    height: 1px;
    background: #7f9dc4;
    transform: rotate(-48deg) translate(-6px, 5px);
  }
  .active-tab {
    font-weight: 700;
    font-size: 12.5px;
    color: #1f3f83;
    background: #fff;
    padding: 0 4px 0 8px;
    margin: -1px 0 0 6px;
    line-height: 16px;
    width: 161px;
  }
  .last-tab {
    margin-left: 4px;
    padding-left: 10px;
    width: 40px;
  }
  .hscroll {
    width: 112px;
    flex: none;
    display: flex;
    background: #6b8db9;
  }
  .split {
    width: 7px;
    background: #e9f0f9;
    border-left: 1px solid #8ba9cf;
    border-right: 1px solid #8ba9cf;
    display: block;
    flex: none;
  }
  .sbtn {
    width: 18px;
    flex: none;
    display: flex;
    align-items: center;
    justify-content: center;
  }
  .thumb {
    flex: 1;
    background: linear-gradient(#e9eff7, #c2d3e8 60%, #9eb6d4);
    border-left: 1px solid #6b8db9;
  }

  /* status bar */
  .status {
    height: 21px;
    flex: none;
    background: linear-gradient(#d8e6f8 0%, #c9ddf6 40%, #b0ccf0 50%, #c0d6f3 100%);
    border-bottom: 1px solid #c8c4b0;
    display: flex;
    align-items: center;
    color: #2d3f6e;
    font-size: 12px;
  }
  .status span {
    width: 46px;
    box-sizing: border-box;
    padding-left: 7px;
    line-height: 20px;
    border-right: 1px solid #a4c0e2;
  }

  /* windows taskbar */
  .taskbar {
    height: 40px;
    flex: none;
    background: linear-gradient(92deg, #b9832e 0, #b6782c 600px, #a3853f 615px, #9a7f42 730px, #bda776 737px, #bea978 870px);
    display: flex;
    align-items: center;
    padding-left: 11px;
  }
  .ti {
    width: 62px;
    flex: none;
    height: 40px;
    display: flex;
    align-items: center;
    justify-content: center;
  }
  .win {
    width: 28px;
    margin-right: 11px;
  }
  .excel {
    width: 58px;
    height: 38px;
    margin-left: 2px;
    box-sizing: border-box;
    background: rgba(255, 255, 255, .22);
    border: 1px solid rgba(255, 255, 255, .55);
  }

  /* page setup dialog */
  .dialog {
    position: absolute;
    left: 378px;
    top: 266px;
    width: 436px;
    height: 460px;
    box-sizing: border-box;
    background: #efc669;
    border: 1px solid #a89464;
    padding: 0 6px 6px;
    display: flex;
    flex-direction: column;
    font-family: "Noto Sans", "Open Sans", sans-serif;
    font-size: 10.5px;
    color: #1a1a1a;
  }
  .dtitle {
    height: 31px;
    flex: none;
    position: relative;
    text-align: center;
    font-size: 14px;
    line-height: 32px;
    color: #444;
  }
  .help {
    position: absolute;
    right: 53px;
    top: -5px;
    font-weight: 700;
    font-size: 13px;
    color: #222;
  }
  .close {
    position: absolute;
    right: -1px;
    top: 1px;
    width: 45px;
    height: 20px;
    background: #c75050;
    display: flex;
    align-items: center;
    justify-content: center;
  }
  .dinner {
    flex: 1;
    background: #f0f0f0;
    border: 1px solid #b9a672;
    padding: 0 8px 0 6px;
    display: flex;
    flex-direction: column;
    min-height: 0;
  }
  .dtabs {
    display: flex;
    height: 19px;
    padding: 8px 0 0 1px;
    flex: none;
    gap: 1px;
  }
  .dtab {
    height: 19px;
    box-sizing: border-box;
    background: linear-gradient(#f4f4f4, #e4e4e4);
    border: 1px solid #acacac;
    border-bottom: 0;
    text-align: center;
    line-height: 20px;
  }
  .dtab.cur {
    background: #fff;
    line-height: 18px;
    position: relative;
    height: 20px;
  }
  .panel {
    height: 354px;
    flex: none;
    background: #fff;
    border: 1px solid #acacac;
    box-sizing: border-box;
    padding: 9px 5px 0 7px;
    display: flex;
    flex-direction: column;
  }
  .frow {
    display: flex;
    height: 20px;
    align-items: center;
    flex: none;
  }
  .plabel {
    width: 61px;
    flex: none;
    padding-top: 1px;
  }
  .ilabel {
    width: 134px;
    flex: none;
    padding: 1px 0 0 9px;
    white-space: nowrap;
  }
  .rep {
    margin-top: 5px;
  }
  .rep.second {
    margin-top: 3px;
  }
  .inp {
    flex: 1;
    height: 20px;
    box-sizing: border-box;
    border: 1px solid #ababab;
    border-right: 0;
    line-height: 19px;
    padding-left: 3px;
    background: #fff;
    min-width: 0;
  }
  .pick {
    width: 21px;
    height: 20px;
    flex: none;
    background: #e4e4e4;
    box-sizing: border-box;
    border: 1px solid #ababab;
    padding: 1px;
  }
  .legend {
    display: flex;
    align-items: center;
    gap: 6px;
    height: 16px;
    margin-top: 2px;
    flex: none;
  }
  .legend i {
    flex: 1;
    height: 1px;
    background: #dcdcdc;
    display: block;
  }
  .lprint {
    margin-top: 7px;
  }
  .printopts {
    display: flex;
    flex: none;
    padding-left: 10px;
    height: 78px;
  }
  .checks {
    width: 152px;
    flex: none;
    display: flex;
    flex-direction: column;
    padding-top: 5px;
    gap: 4px;
    font-size: 10.2px;
  }
  .checks label,
  .radios label {
    display: flex;
    align-items: center;
    gap: 3px;
    height: 15px;
    white-space: nowrap;
  }
  .cb {
    width: 13px;
    height: 13px;
    box-sizing: border-box;
    border: 1px solid #707070;
    background: #fff;
    display: block;
    flex: none;
  }
  .rb {
    width: 13px;
    height: 13px;
    box-sizing: border-box;
    border: 1px solid #707070;
    border-radius: 50%;
    background: #fff;
    display: block;
    flex: none;
  }
  .rb.on {
    background: radial-gradient(circle, #222 0 3.500px, #fff 4px);
  }
  .selects {
    flex: 1;
    display: flex;
    flex-direction: column;
    gap: 5px;
    padding-top: 6px;
  }
  .srow {
    display: flex;
    height: 20px;
    align-items: center;
  }
  .srow > span:first-child {
    width: 77px;
    flex: none;
  }
  .sel {
    flex: 1;
    height: 20px;
    box-sizing: border-box;
    border: 1px solid #ababab;
    line-height: 18px;
    padding-left: 3px;
    display: flex;
    justify-content: space-between;
  }
  .sel i {
    width: 17px;
    background: #e4e4e4;
    border-left: 1px solid #ababab;
    display: flex;
    align-items: center;
    justify-content: center;
  }
  .lorder {
    margin-top: 6px;
  }
  .order {
    display: flex;
    padding: 6px 0 0 10px;
    height: 101px;
    flex: none;
    box-sizing: border-box;
  }
  .radios {
    width: 111px;
    flex: none;
    display: flex;
    flex-direction: column;
    gap: 4px;
  }
  .orderpic svg {
    display: block;
  }
  .pbtns {
    display: flex;
    gap: 10px;
    justify-content: flex-end;
    padding: 1px 2px 0 0;
  }
  .btn {
    width: 74px;
    height: 22px;
    box-sizing: border-box;
    border: 1px solid #acacac;
    background: linear-gradient(#f0f0f0, #e5e5e5);
    text-align: center;
    line-height: 20px;
    display: block;
    flex: none;
    white-space: nowrap;
  }
  .btn.wide {
    width: 80px;
  }
  .dfoot {
    display: flex;
    justify-content: flex-end;
    gap: 10px;
    padding-top: 9px;
    margin-right: -1px;
  }
  .btn.ok {
    border-color: #3399ff;
  }
  .marks {
    position: absolute;
    left: 0;
    top: 0;
    pointer-events: none;
  }
</style>
